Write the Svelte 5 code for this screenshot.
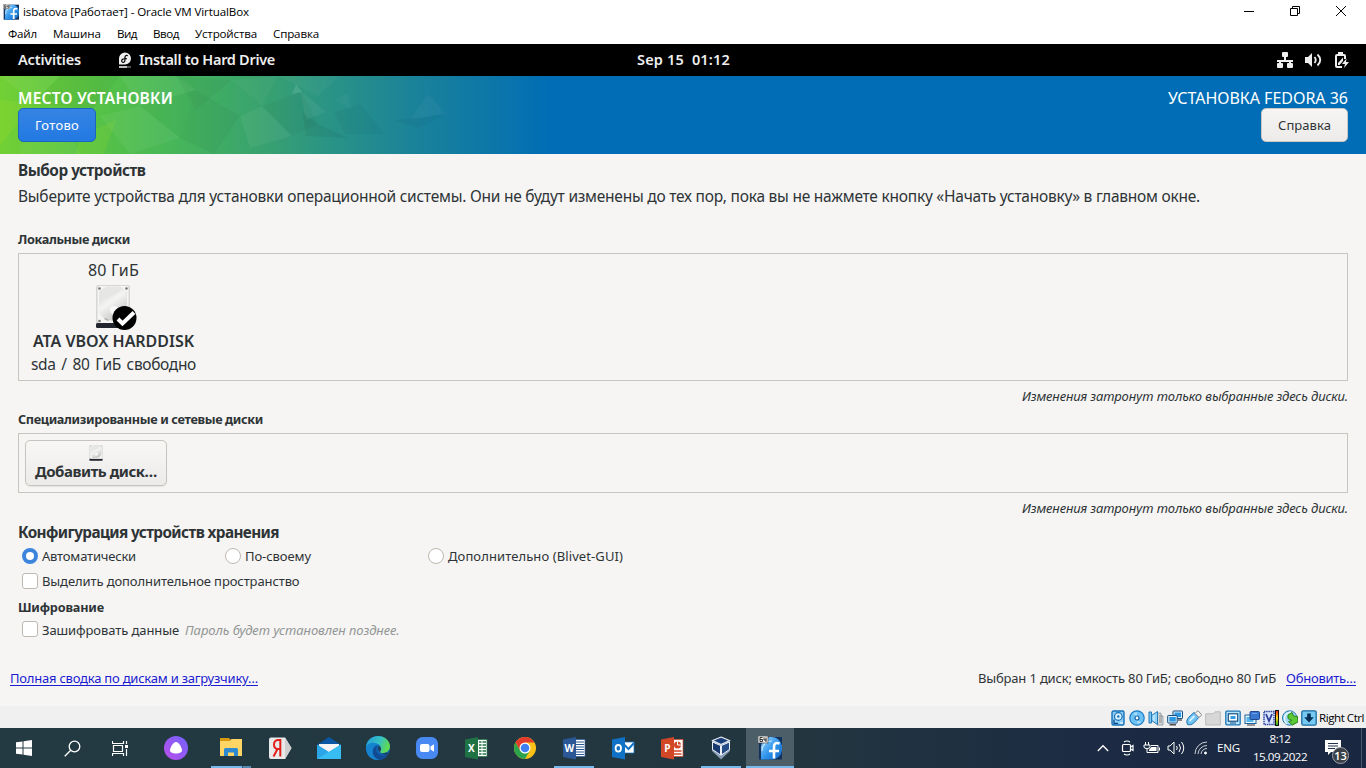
<script>
  // Tracks a label so that its run of text takes the given measure.
  function fit(node, width) {
    const range = document.createRange();
    range.selectNodeContents(node);
    const natural = range.getBoundingClientRect().width;
    node.style.letterSpacing = (width - natural) / node.textContent.length + 'px';
  }

  const menu = [['Файл', 29], ['Машина', 48], ['Вид', 20], ['Ввод', 26], ['Устройства', 62], ['Справка', 46]];
  const methods = [
    ['Автоматически', 94, true],
    ['По-своему', 66, false],
    ['Дополнительно (Blivet-GUI)', 175, false]
  ];
  const devices = ['hdd', 'cd', 'audio', 'net', 'usb', 'folder', 'display', 'record', 'cpu', 'mouse', 'key'];
  const apps = ['explorer', 'yandex', 'mail', 'edge', 'zoom', 'excel', 'chrome', 'word', 'outlook', 'ppt', 'vbox', 'fedora'];
  const running = ['explorer', 'word', 'vbox', 'fedora'];
  const facets = [
    ['0,0 60,0 34,26', '#fff', 0.05], ['0,24 34,26 0,70', '#ff0', 0.07], ['34,26 60,0 120,0 92,34', '#000', 0.03],
    ['120,0 176,0 196,14 140,30', '#fff', 0.05], ['176,0 232,4 196,34', '#000', 0.03], ['100,40 140,30 180,62 130,78', '#fff', 0.05],
    ['180,62 196,14 240,40 214,78', '#000', 0.03], ['80,60 116,44 104,78 76,78', '#ff0', 0.07], ['232,4 278,0 262,30', '#fff', 0.03],
    ['240,40 262,30 292,60 250,72', '#fff', 0.05], ['292,18 296,8 302,16', '#fff', 0.11], ['262,30 302,16 318,48 292,60', '#000', 0.03],
    ['278,0 340,0 318,20', '#fff', 0.03], ['302,36 318,48 348,62 306,60', '#000', 0.05], ['334,36 360,28 385,58 345,58', '#000', 0.03],
    ['410,44 428,18 446,38', '#fff', 0.035], ['394,44 446,38 418,52', '#000', 0.03], ['300,14 326,36 306,44', '#fff', 0.05],
    ['140,30 196,14 180,62', '#000', 0.02], ['20,70 64,40 80,78 20,78', '#fff', 0.04], ['334,24 348,17 352,34', '#fff', 0.03]
  ];
</script>

{#snippet disk(w, h)}
  <svg width={w} height={h} viewBox="0 0 36 45" preserveAspectRatio="none">
    <defs>
      <linearGradient id="plate" x1="0" y1="0" x2="0.6" y2="1"><stop offset="0" stop-color="#d2d2d0" /><stop offset=".5" stop-color="#f4f4f3" /><stop offset="1" stop-color="#c6c6c4" /></linearGradient>
    </defs>
    <rect x="1" y="1" width="34" height="43" rx="2.5" fill="#d6d6d4" />
    <rect x="1" y="39" width="34" height="5" rx="1.5" fill="#23262e" />
    <rect x="2.5" y="2" width="31" height="37" rx="2" fill="#f5f5f4" />
    <path d="M4 7C9 5 9 2.5 14 2.5H24C28 2.5 28 6 32 8V29C29 38 8 38 4 28Z" fill="#e6e6e5" />
    <path d="M5 13C12 16 23 10 28 4C34 11 33 28 27 33C20 39 5 38 4 25Z" fill="url(#plate)" />
    <circle cx="19" cy="26" r="4" fill="#f8f8f8" />
    <g fill="#777"><circle cx="4.5" cy="4.5" r="1.3" /><circle cx="31.5" cy="4.5" r="1.3" /><circle cx="4.5" cy="37" r="1.3" /><path d="M10 34l4 2-1 1-4-2z" fill="#aaa" /></g>
  </svg>
{/snippet}

{#snippet deviceIcon(n)}
  <svg width="16" height="16" viewBox="0 0 16 16">
    {#if n === 'hdd'}
      <rect x="2" y="1" width="12" height="14" rx="1.5" fill="#8fcdf7" stroke="#1670b8" stroke-width="1.4" /><circle cx="8.3" cy="6.5" r="3.8" fill="#d6f0ff" stroke="#1670b8" stroke-width="1.2" /><circle cx="8.3" cy="6.5" r="1.2" fill="#1670b8" /><path d="M4 9.500V13.300H8" stroke="#0c4c86" fill="none" stroke-width="1.300" /><path d="M10 13h3" stroke="#fff" />
    {:else if n === 'cd'}
      <circle cx="8" cy="8" r="7.200" fill="#6cc1f5" stroke="#1c7cc4" stroke-width="1.2" /><path d="M4 4a6 6 0 0 1 4-2v4zM12 12a6 6 0 0 1-4 2v-4z" fill="#a5dcfb" /><circle cx="8" cy="8" r="2" fill="#fff" stroke="#1764a6" stroke-width="1.200" />
    {:else if n === 'audio'}
      <path d="M9 3h4v3h2v9H9z" fill="#d5d8da" stroke="#91979b" stroke-width=".8" /><path d="M11 6h3M11 8h3M11 10h3M11 12h3" stroke="#777" stroke-width=".8" /><path d="M1 2h2.500v11H1z" fill="#77c7f4" stroke="#2479b6" /><path d="M3.500 5.500L9.500 1.500v13L3.500 10.500z" fill="#8fd2fa" stroke="#2479b6" /><path d="M6 5v6" stroke="#d9f3ff" />
    {:else if n === 'net'}
      <rect x="6" y="1" width="9.500" height="7.500" rx=".6" fill="#d7f1ff" stroke="#164a7c" /><rect x="7.500" y="2.500" width="6.500" height="4.500" fill="#2b97e0" /><path d="M11 10h4" stroke="#555" stroke-width="1.400" /><rect x=".7" y="5.500" width="9.500" height="7.500" rx=".6" fill="#d7f1ff" stroke="#164a7c" /><rect x="2.300" y="7" width="6.500" height="4.500" fill="#2b97e0" /><path d="M2.500 14.800h6.500" stroke="#444" stroke-width="1.400" />
    {:else if n === 'usb'}
      <path d="M1.500 14.500C-.5 10 2 7.500 8 2.500L13 7C9 12 6 16 1.500 14.500z" fill="#6fc2f2" stroke="#1c6fae" /><path d="M9 3.500l2.800-2.800 4 4-2.800 2.800z" fill="#f2f2f2" stroke="#858585" /><path d="M3.500 11l5-5" stroke="#d5f2ff" stroke-width="1.800" />
    {:else if n === 'folder'}
      <path d="M.7 15V3.800H8l2-2h5.300V15z" fill="#d7d7d7" stroke="#b9b9b9" />
    {:else if n === 'display'}
      <rect x=".8" y="1.200" width="14.400" height="13.600" rx="1" fill="#b7e5ff" stroke="#1d75b5" stroke-width="1.300" /><rect x="3.300" y="3.800" width="9.400" height="7.400" fill="#fff" stroke="#174e80" stroke-width="1.200" /><rect x="5.500" y="6" width="5" height="3" fill="#329edf" /><path d="M5 13h6" stroke="#174e80" />
    {:else if n === 'record'}
      <rect x="1" y="5" width="11" height="8.500" fill="#e7f6ff" stroke="#1b65a0" /><rect x="2.500" y="7" width="7" height="5" fill="#55b6ec" /><rect x="6" y="1.500" width="9.500" height="8" rx="1" fill="#3976cf" stroke="#20488e" /><path d="M8 3.500h5" stroke="#6ca2eb" /><path d="M3 15h8" stroke="#666" stroke-width="1.300" />
    {:else if n === 'cpu'}
      <rect x="1" y="1.500" width="10" height="13" fill="#dbe5ff" stroke="#2f489f" stroke-width="1.500" stroke-dasharray="1.500 .7" /><path d="M3 4l3 7 3-7" fill="none" stroke="#2c3d98" stroke-width="1.800" /><defs><linearGradient id="load" x2="0" y2="1"><stop stop-color="#e91b10" /><stop offset=".5" stop-color="#ffda15" /><stop offset="1" stop-color="#18a51e" /></linearGradient></defs><rect x="12.500" y=".5" width="3" height="15" fill="url(#load)" stroke="#111" />
    {:else if n === 'mouse'}
      <circle cx="7.700" cy="8" r="7.200" fill="#a3d9f4" stroke="#2878ad" /><path d="M5 14C0 9 3 3 9 2" fill="none" stroke="#e5f7ff" stroke-width="1.500" /><path d="M6 5l4-2.500 1.500 3.500 4 .5.5 5.500L10.500 15 6.500 11.500l3.500-1-4-2z" fill="#5cc934" stroke="#25821a" />
    {:else}
      <rect x=".8" y=".8" width="14.400" height="14.400" rx="1.500" fill="#75c9f3" stroke="#1b6c9f" stroke-width="1.300" /><path d="M6.200 3.500h3.600V7.300H12.800L8 12.500 3.200 7.300h3z" fill="#082f55" />
    {/if}
  </svg>
{/snippet}

{#snippet fedoraTile(s)}
  <svg width={s} height={s} viewBox="0 0 24 24">
    <defs><linearGradient id="fed" x1="0" y1="0" x2="1" y2="1"><stop stop-color="#9ad8ff" /><stop offset=".55" stop-color="#2d92ea" /><stop offset="1" stop-color="#1668c0" /></linearGradient></defs>
    <rect x="1" y="1" width="23" height="22.500" fill="#14305c" /><path d="M3 23V13A10.500 10.500 0 0 1 24 10V14A10 10 0 0 1 14 23.500H3z" fill="url(#fed)" /><path d="M4 15A9.500 9.500 0 0 1 14 5" fill="none" stroke="#c5e9ff" stroke-width="1.200" />
    <path d="M21.500 7.500C17.500 6 16 8 16 11V22.500M11 15H21" fill="none" stroke="#fff" stroke-width="2.600" />
    <rect x="0" y="0" width="10" height="7" fill="#eee" stroke="#333" stroke-width=".6" /><path d="M4.500 1.500H2v4h2.500v-2H2M6 1.500v2.500h2.500M8 1.500v4.500" fill="none" stroke="#222" stroke-width=".9" />
  </svg>
{/snippet}

{#snippet appIcon(n)}
  {#if n === 'fedora'}
    {@render fedoraTile(24)}
  {:else}
    <svg width="24" height="24" viewBox="0 0 24 24">
      {#if n === 'explorer'}
        <path d="M1 2h9l2 2v4H1z" fill="#d99a12" /><path d="M1 5h10l1.500-2H23v17H1z" fill="#ffd666" /><path d="M5 20v-6.500q0-1.500 1.500-1.500h11q1.500 0 1.500 1.500V20h-4v-3.500H9V20z" fill="#2e8ad0" />
      {:else if n === 'yandex'}
        <path d="M3 1.500H17L23.500 12 17 23H3Q1 23 1 21V3.500Q1 1.500 3 1.500z" fill="#e9e9e9" /><path d="M17 1.500L23.500 12 17 23z" fill="#cfcfcf" /><path d="M12.300 20.500V4H10Q6 4.500 6 8.500T9.500 13H12M9.500 13L5.500 20.500" fill="none" stroke="#e21f1a" stroke-width="2" />
      {:else if n === 'mail'}
        <path d="M0 9L12 1 24 9V14H0z" fill="#0a57a5" /><path d="M2 8h20v7L12 18 2 15z" fill="#f5f5f5" /><path d="M0 8.500L12 16 24 8.500V23H0z" fill="#2aa5e6" /><path d="M0 23L24 8.500V23z" fill="#38bdf2" />
      {:else if n === 'edge'}
        <defs><linearGradient id="eg" x1="0" y1="0" x2="1" y2=".3"><stop stop-color="#249dd8" /><stop offset=".6" stop-color="#35c1c5" /><stop offset="1" stop-color="#5fda55" /></linearGradient></defs>
        <circle cx="12" cy="12" r="12" fill="#0f63b4" /><path d="M0 12C0 5 5 0 12 0S24 5 24 10.500C24 15 20 17 16.500 17C13 17 14 15 15 14C16 11 13 7.500 9 7.500C4 7.500 0 10 0 13z" fill="url(#eg)" /><path d="M0 11.500C1 7 9 5 12.500 9C9 8.500 6 12 7 16C8 20 10 23 14 23.800C5 25 0 19 0 11.500z" fill="#1683ce" /><path d="M11.500 10C8 14 12 20 18 19.500Q20 19.500 22 18.500C20 22 16 24 13 23.800C5 21 5 12 11.500 10z" fill="#124b93" /><path d="M12 10.500C14 10 15.500 12 15 14C14 15 13 17 17 17.500L22.500 16.500 22 18.500C16 20 11 15 12 10.500z" fill="#24363f" fill-opacity=".75" />
      {:else if n === 'zoom'}
        <rect x="1" y="1" width="22" height="22" rx="6.500" fill="#4889f4" /><rect x="5" y="8" width="9.500" height="8" rx="2" fill="#fff" /><path d="M15.500 10.500L19 8.300V15.700L15.500 13.500z" fill="#fff" />
      {:else if n === 'chrome'}
        <circle cx="12" cy="12" r="11" fill="#fbc116" /><path d="M2.500 6.500A11 11 0 0 1 21.500 6.500H12L7.200 14.700z" fill="#e33b2e" /><path d="M2.500 6.500L7.200 14.700 12 17.500 16.700 14.800 12 23A11 11 0 0 1 2.500 6.500z" fill="#2ba24c" /><circle cx="12" cy="12" r="5.500" fill="#fff" /><circle cx="12" cy="12" r="4.300" fill="#3f7ff0" />
      {:else if n === 'vbox'}
        <path d="M12 1L21 5V15L12 23.500 3 15V5z" fill="#8a9cb4" /><path d="M12 1L20.500 4.500 12 8.500 3.500 4.500z" fill="#1b4079" stroke="#eef2f8" stroke-width="1.100" /><path d="M3.500 6L11.500 9.500V19L3.500 13.500z" fill="#17396d" stroke="#eef2f8" /><path d="M20.500 6L12.500 9.500V19L20.500 13.500z" fill="#254d87" stroke="#eef2f8" />
      {:else}
        {@const c = { excel: '#1f7244', word: '#2b5797', outlook: '#0f72c6', ppt: '#d24726' }[n]}
        <rect x="12" y={n === 'outlook' ? 6 : 3.500} width="11" height={n === 'outlook' ? 11 : 17} fill="#fff" stroke={c} stroke-width=".7" />
        {#if n === 'excel'}<path d="M15 6h2.500m1 0H22M15 9h2.500m1 0H22M15 12h2.500m1 0H22M15 15h2.500m1 0H22M15 18h2.500m1 0H22" stroke={c} stroke-width="1.600" />
        {:else if n === 'word'}<path d="M14 6h8M14 8.500h8M14 11h8M14 13.500h8M14 16h8M14 18.500h8" stroke={c} stroke-width="1.200" />
        {:else if n === 'outlook'}<path d="M13.500 9l4 4 5.500-6" fill="none" stroke={c} stroke-width="2" />
        {:else}<circle cx="17.500" cy="9" r="3.500" fill={c} /><path d="M17.500 5v4h4" stroke="#fff" fill="none" /><path d="M14 15h7.500M14 18h7.500" stroke={c} stroke-width="1.500" />{/if}
        <path d="M1 3.500L14 1V23.500L1 21z" fill={c} />
        {#if n === 'outlook'}<ellipse cx="7.300" cy="12.300" rx="2.700" ry="3.300" fill="none" stroke="#fff" stroke-width="1.800" />
        {:else}<text x="7.300" y="16" text-anchor="middle" class="letter" fill="#fff">{{ excel: 'X', word: 'W', ppt: 'P' }[n]}</text>{/if}
      {/if}
    </svg>
  {/if}
{/snippet}

<div class="screen">
  <header class="titlebar">
    {@render fedoraTile(16)}
    <span class="win" use:fit={226}>isbatova [Работает] - Oracle VM VirtualBox</span>
    <div class="controls">
      <svg width="12" height="12" viewBox="0 0 12 12"><path d="M1 6.500h10" stroke="#000" /></svg>
      <svg width="12" height="12" viewBox="0 0 12 12" fill="none" stroke="#000"><path d="M1.500 3.500h7v7h-7zM3.500 3.500v-2h7v7h-2" /></svg>
      <svg width="12" height="12" viewBox="0 0 12 12" stroke="#000"><path d="M1 1l10 10M11 1L1 11" /></svg>
    </div>
  </header>
  <nav class="menubar">
    {#each menu as [t, w]}<span class="win" use:fit={w}>{t}</span>{/each}
  </nav>

  <div class="gnome">
    <div class="left">
      <span class="g" use:fit={63}>Activities</span>
      <svg width="14" height="16" viewBox="0 0 14 16"><path d="M1 12.500V6.500A6 6 0 1 1 7 12.500z" fill="#eee" /><path d="M9.800 3.600C7.500 2.800 6.900 4.300 6.900 6V8.500C6.900 11 3.500 10.800 3.700 8.600 4 6.700 6 6.700 8.800 6.700" fill="none" stroke="#000" stroke-width="1.200" /><path d="M1 15h8" stroke="#eee" stroke-width="1.600" /><path d="M9 15h4" stroke="#666" stroke-width="1.600" /></svg>
      <span class="g" use:fit={136}>Install to Hard Drive</span>
    </div>
    <span class="clock g" use:fit={93}>Sep 15&nbsp; 01:12</span>
    <div class="status">
      <svg width="16" height="16" viewBox="0 0 16 16" fill="#eee"><rect x="5" y="0" width="6" height="5" rx="1" /><path d="M7 4h2v4h7v2H0V8h7z" /><rect x="0" y="11" width="6" height="5" rx="1" /><rect x="10" y="11" width="6" height="5" rx="1" /><path d="M2 9h2v3H2zM12 9h2v3h-2z" /></svg>
      <svg width="17" height="16" viewBox="0 0 17 16"><path d="M0 5h3l4-4v14l-4-4H0z" fill="#eee" /><path d="M9.500 5Q12 8 9.500 11M12.500 2.500Q18 8 12.500 13.500" fill="none" stroke="#eee" stroke-width="1.800" /></svg>
      <svg width="15" height="16" viewBox="0 0 15 16"><path d="M8 15H3Q2 15 2 14V4Q2 3 3 3H10Q11 3 11 4V7" fill="none" stroke="#eee" stroke-width="2" /><path d="M4 0h5v3H4zM4 13V11L9 5.500V9l-3.500 4z" fill="#eee" /><path d="M12.500 6.500L8 12h3l-1 4 5-6h-3z" fill="#eee" /></svg>
    </div>
  </div>

  <div class="banner">
    <svg class="facets" width="560" height="78" viewBox="0 0 560 78">
      {#each facets as [points, fill, o]}<polygon {points} {fill} fill-opacity={o} />{/each}
    </svg>
    <div class="side">
      <span class="bold16" use:fit={155}>МЕСТО УСТАНОВКИ</span>
      <button class="done"><span use:fit={44}>Готово</span></button>
    </div>
    <div class="side end">
      <span class="reg16" use:fit={180}>УСТАНОВКА FEDORA 36</span>
      <button class="help"><span use:fit={53}>Справка</span></button>
    </div>
  </div>

  <main>
    <h1 class="first"><span use:fit={127.5}>Выбор устройств</span></h1>
    <p class="intro"><span use:fit={1182}>Выберите устройства для установки операционной системы. Они не будут изменены до тех пор, пока вы не нажмете кнопку «Начать установку» в главном окне.</span></p>
    <h2 class="local"><span use:fit={112}>Локальные диски</span></h2>
    <section class="box disks">
      <div class="drive">
        <span class="size" use:fit={51}>80 ГиБ</span>
        <div class="pic">
          {@render disk(36, 45)}
          <svg class="tick" width="25" height="24" viewBox="0 0 25 24"><circle cx="12.500" cy="12" r="12" fill="#000" /><path d="M6 13l4.500 4.500L22 6.500" fill="none" stroke="#fff" stroke-width="4" /></svg>
        </div>
        <strong class="name"><span use:fit={161}>ATA VBOX HARDDISK</span></strong>
        <span class="free"><span use:fit={165}>sda / 80 ГиБ свободно</span></span>
      </div>
    </section>
    <p class="note"><em use:fit={326}>Изменения затронут только выбранные здесь диски.</em></p>
    <h2 class="special"><span use:fit={245}>Специализированные и сетевые диски</span></h2>
    <section class="box network">
      <button class="add">{@render disk(14, 16)}<span use:fit={122}>Добавить диск…</span></button>
    </section>
    <p class="note"><em use:fit={326}>Изменения затронут только выбранные здесь диски.</em></p>
    <h1 class="config"><span use:fit={261}>Конфигурация устройств хранения</span></h1>
    <div class="methods">
      {#each methods as [t, w, on]}
        <div class="opt"><i class="radio" class:on></i><span use:fit={w}>{t}</span></div>
      {/each}
    </div>
    <div class="opt extra"><i class="check"></i><span use:fit={257.5}>Выделить дополнительное пространство</span></div>
    <h2 class="crypt"><span use:fit={86}>Шифрование</span></h2>
    <div class="opt encrypt"><i class="check"></i><span use:fit={137}>Зашифровать данные</span><em use:fit={214.5}>Пароль будет установлен позднее.</em></div>
    <footer>
      <span class="link" use:fit={248}>Полная сводка по дискам и загрузчику…</span>
      <span class="total" use:fit={298}>Выбран 1 диск; емкость 80 ГиБ; свободно 80 ГиБ</span>
      <span class="link" use:fit={70}>Обновить…</span>
    </footer>
  </main>

  <div class="vmbar">
    {#each devices as d}{@render deviceIcon(d)}{/each}
    <span class="win" use:fit={45}>Right Ctrl</span>
  </div>

  <div class="taskbar">
    <div class="slot s48"><svg width="16" height="16" viewBox="0 0 16 16" fill="#fff"><path d="M0 2.300L6.500 1.400V7.500H0zM7.500 1.200L16 0V7.500H7.500zM0 8.500H6.500V14.600L0 13.700zM7.500 8.500H16V16L7.500 14.800z" /></svg></div>
    <div class="slot s48"><svg width="17" height="17" viewBox="0 0 17 17" fill="none" stroke="#fff" stroke-width="1.300"><circle cx="10.500" cy="6.500" r="5.300" /><path d="M6.700 10.300L.7 16.300" /></svg></div>
    <div class="slot s48"><svg width="17" height="17" viewBox="0 0 17 17" fill="none" stroke="#fff"><path d="M.5 1v2.500h11V1M.5 16v-2.500h11V16M1.500 5.500h9v6h-9zM14.500 1v3M14.500 9v7" stroke-width="1.200" /><path d="M13 5h3v3h-3z" fill="#fff" stroke="none" /></svg></div>
    <div class="slot alice"><svg width="24" height="24" viewBox="0 0 24 24"><defs><linearGradient id="al" x1="1" y1="0" x2="0" y2="1"><stop stop-color="#7263ff" /><stop offset="1" stop-color="#bb4ee8" /></linearGradient></defs><circle cx="12" cy="12" r="12" fill="url(#al)" /><path d="M12 6C15 6 18 12 18 14.500 18 18.500 6 18.500 6 14.500 6 12 9 6 12 6z" fill="#fff" /></svg></div>
    {#each apps as a}
      <div class="slot" class:active={a === 'fedora'}>
        {@render appIcon(a)}
        {#if running.includes(a)}<i class="run {a}"></i>{/if}
      </div>
    {/each}
    <div class="tray">
      <svg width="12" height="8" viewBox="0 0 12 8" fill="none" stroke="#fff" stroke-width="1.300"><path d="M.8 7L6 1.700 11.200 7" /></svg>
      <svg width="14" height="16" viewBox="0 0 14 16" fill="none" stroke="#fff" stroke-width="1.200"><path d="M3 2Q6 0 9 2M3 14Q6 16 9 14" /><rect x="1.500" y="4.500" width="8" height="7" rx="1" /><path d="M9.500 7l2.500-1.500v5L9.500 9" /></svg>
      <svg width="17" height="14" viewBox="0 0 17 14" fill="none" stroke="#fff"><path d="M2.500 1v3M5.500 1v3M1 4h6v2Q7 7.500 4 7.500Q1 7.500 1 6zM4 7.500V11.500M8 4.500h7v7H4" /><path d="M8.500 6H13.500v4H6V8.500z" fill="#fff" stroke="none" /><path d="M16.500 6.500v3" /></svg>
      <svg width="18" height="14" viewBox="0 0 18 14" fill="none" stroke="#fff"><path d="M1 5h2l4-4v12L3 9H1zM9.500 5q1.500 2 0 4M12 3q3 4 0 8M14.500 1q4.500 6 0 12" /></svg>
      <svg width="14" height="14" viewBox="0 0 14 14" fill="none" stroke="#ccd0d8"><path d="M1 13A12 12 0 0 1 13 1M4 13A9 9 0 0 1 13 4.500M7 13A6 6 0 0 1 13 7.500" /><circle cx="11.500" cy="12" r="1" fill="#fff" stroke="#fff" /></svg>
      <span class="lang" use:fit={23}>ENG</span>
      <div class="time"><span use:fit={21}>8:12</span><span use:fit={54}>15.09.2022</span></div>
      <div class="bell">
        <svg width="17" height="16" viewBox="0 0 17 16"><path d="M0 0h16v12H6l-3 3v-3H0z" fill="#fff" /><path d="M3 3.500h10M3 6h10M3 8.500h7" stroke="#24344a" /></svg>
        <b>13</b>
      </div>
    </div>
  </div>
</div>

<style>
  :global(body) { overflow: hidden; }
  .screen { width: 1366px; height: 768px; display: flex; flex-direction: column; background: #f6f5f4; color: #2e3436; font: 13px/20px "Noto Sans", sans-serif; white-space: nowrap; }
  .screen * { box-sizing: border-box; }
  svg { display: block; flex: none; }
  h1, h2, p { margin: 0; display: flex; }
  button { font: inherit; padding: 0; }
  .win { font: 11.600px/16px "Open Sans", sans-serif; color: #000; }
  .titlebar { height: 24px; background: #fff; display: flex; align-items: center; padding: 0 19px 0 3px; gap: 4px; }
  .controls { margin-left: auto; display: flex; gap: 34px; margin-top: -3px; }
  .menubar { height: 20px; background: #fff; display: flex; align-items: center; padding-left: 8px; gap: 16px; }
  .gnome { height: 32px; background: #000; color: #eee; font-size: 14.500px; font-weight: 600; display: grid; grid-template-columns: 1fr 93px 1fr; align-items: center; padding: 0 17px 0 18px; }
  .gnome .left { display: flex; align-items: center; }
  .gnome .left svg { margin: 0 7px 0 37px; }
  .g { margin-top: -2px; }
  .clock { white-space: pre; }
  .status { display: flex; justify-content: flex-end; align-items: center; gap: 12px; }
  .banner { height: 78px; position: relative; display: flex; justify-content: space-between; padding: 12px 18px; color: #fff; background: linear-gradient(90deg, #72d035 0, #59c443 85px, #46b659 175px, #37a071 270px, #2a9386 330px, #1b8398 410px, #0b75aa 500px, #006db6 550px); }
  .facets { position: absolute; left: 0; top: 0; }
  .side { position: relative; display: flex; flex-direction: column; align-items: flex-start; }
  .side > span { height: 20px; }
  .end { align-items: flex-end; }
  .bold16 { font-size: 15.500px; font-weight: 600; }
  .reg16 { font-size: 16px; }
  .done { width: 78px; height: 34px; border: 1px solid #1b66c0; border-radius: 5px; background: linear-gradient(#3584e4, #2379e2); color: #fff; }
  .help { width: 87px; height: 34px; border: 1px solid #cdc7c2; border-radius: 5px; background: linear-gradient(#f6f5f4, #edebe9); color: #2e3436; }
  main { height: 552px; display: flex; flex-direction: column; padding: 4px 18px 0; }
  h1 { font-size: 15.300px; font-weight: 700; }
  h2 { font-size: 12.700px; font-weight: 700; }
  .first { height: 24px; line-height: 24px; }
  .intro { height: 46px; font-size: 15.500px; line-height: 28px; }
  .local { height: 25px; line-height: 22px; }
  .box { border: 1px solid #c8c4c0; flex: none; }
  .disks { height: 128px; padding: 6px 12px; display: flex; }
  .drive { width: 165px; display: flex; flex-direction: column; align-items: center; font-size: 16px; }
  .drive > * { flex: none; }
  .size { height: 24px; line-height: 20px; }
  .pic { position: relative; height: 46px; margin-left: -2px; }
  .tick { position: absolute; left: 17px; top: 22px; }
  .name { height: 23px; line-height: 23px; font-weight: 600; }
  .free { line-height: 22px; word-spacing: 2px; font-size: 15.500px; }
  .note { height: 30px; line-height: 30px; justify-content: flex-end; }
  .special { height: 22px; line-height: 16px; }
  .network { height: 60px; padding: 6px; }
  .add { width: 142px; height: 46px; border: 1px solid #c8c3be; border-radius: 5px; background: linear-gradient(#f8f7f6, #edebe9); box-shadow: 0 1px 1px #0001; display: flex; flex-direction: column; align-items: center; padding-top: 4px; color: #2e3436; font-size: 15px; font-weight: 700; }
  .config { height: 21px; line-height: 18px; }
  .methods { height: 24px; display: grid; grid-template-columns: 203px 203px 220px; }
  .opt { display: flex; align-items: center; padding-left: 4px; }
  .radio, .check { width: 16px; height: 16px; flex: none; border: 1px solid #bfb8b1; background: #fff; margin-right: 4px; }
  .radio { border-radius: 50%; }
  .radio.on { border: 4px solid #3d85dc; }
  .check { border-radius: 3px; }
  .extra { height: 24px; margin-top: 1px; }
  .crypt { height: 22px; line-height: 20px; margin-top: 4px; }
  .encrypt { height: 22px; }
  .encrypt em { color: #929595; margin-left: 6px; }
  .encrypt .check { margin-top: -2px; }
  footer { display: flex; height: 20px; margin: 27px -8px 0; }
  .link { color: #1b1bd0; text-decoration: underline; text-underline-offset: 2px; text-decoration-thickness: 1px; }
  .total { margin: 0 10px 0 auto; }
  .vmbar { height: 22px; background: #f0f0f0; display: flex; align-items: center; gap: 3.100px; padding: 2px 0 0 1110px; }
  .vmbar .win { margin-left: -1px; }
  .taskbar { height: 40px; display: flex; background: linear-gradient(90deg, #233a43 0, #22363f 58%, #1c2b43 80%, #1a2741 100%); color: #fff; }
  .slot { width: 49px; height: 40px; display: flex; align-items: center; justify-content: center; position: relative; flex: none; }
  .s48 { width: 48px; }
  .alice { width: 48px; margin: 0 6px 0 8px; }
  .active { width: 48px; margin-left: 1px; background: #4c5e68; }
  .run { position: absolute; bottom: 0; left: 5px; width: 40px; height: 2px; background: #76b9ed; }
  .run.fedora { left: 0; width: 48px; }
  .run.explorer { width: 40px; background: linear-gradient(90deg, #76b9ed 31px, #35536a 31px, #35536a 32px, #5689b0 32px); }
  .letter { font: 700 10px "Open Sans", sans-serif; }
  .tray { margin-left: auto; display: flex; align-items: center; font: 11.600px/18px "Open Sans", sans-serif; padding-right: 4px; }
  .tray > svg:nth-child(1) { margin-right: 12px; }
  .tray > svg:nth-child(2) { margin-right: 8px; }
  .tray > svg:nth-child(3) { margin-right: 7px; }
  .tray > svg:nth-child(4) { margin-right: 9px; }
  .lang { margin-left: 9px; width: 23px; }
  .time { width: 54px; margin-left: 13px; display: flex; flex-direction: column; align-items: center; }
  .bell { position: relative; margin: 0 0 0 18px; padding-right: 19px; width: 37px; height: 40px; padding-top: 12px; border-right: 1px solid #4b566b; }
  .bell b { position: absolute; left: 7px; top: 19px; width: 17px; height: 17px; border-radius: 50%; border: 1px solid #9aa1a8; background: #3b4147; font: 600 11px/15px "Open Sans", sans-serif; text-align: center; }
</style>
